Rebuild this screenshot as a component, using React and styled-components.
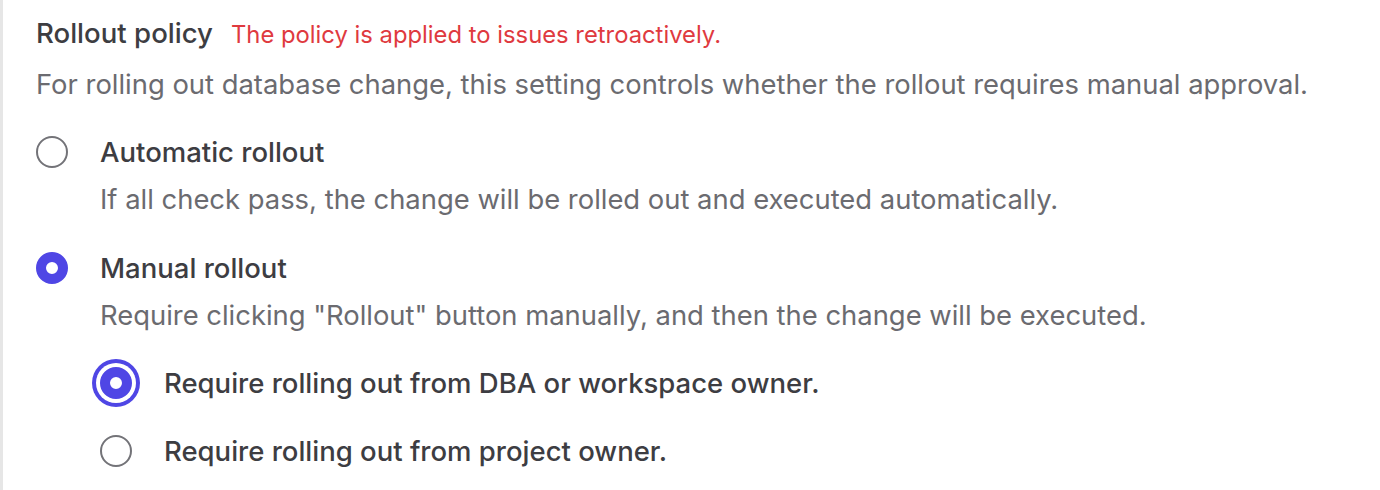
import React, { useState } from 'react';
import styled, { createGlobalStyle } from 'styled-components';

const GlobalStyle = createGlobalStyle`
  body {
    margin: 0;
    background: #ffffff;
    font-family: Inter, "Noto Sans", sans-serif;
  }
`;

const Panel = styled.section`
  border-left: 3px solid #e6e6e6;
  min-height: 490px;
  box-sizing: border-box;
  padding: 13px 0 0 33px;
`;

const TitleRow = styled.div`
  display: flex;
  align-items: baseline;
  gap: 18px;
  line-height: 40px;
`;

const Title = styled.h2`
  margin: 0;
  font-size: 27.6px;
  font-weight: 500;
  color: #3d3d42;
`;

const Warning = styled.span`
  font-size: 23.8px;
  color: #df3a3f;
`;

const Description = styled.p`
  margin: ${({ $top }) => $top || '9px'} 0 0;
  font-size: 27.4px;
  line-height: 40px;
  color: #6b6b70;
`;

const Options = styled.div`
  display: flex;
  flex-direction: column;
  gap: ${({ $gap }) => $gap || '29px'};
  margin-top: ${({ $top }) => $top || '28px'};
`;

const Option = styled.label`
  display: flex;
  align-items: center;
  gap: 32px;
  cursor: pointer;
  line-height: 40px;
`;

const Radio = styled.span`
  flex: none;
  width: 32px;
  height: 32px;
  box-sizing: border-box;
  border-radius: 50%;
  border: ${({ $checked }) => ($checked ? '10px solid #4f46e5' : '2px solid #737378')};
  background: #ffffff;
  box-shadow: ${({ $focus }) => ($focus ? '0 0 0 4px #ffffff, 0 0 0 8px #4f46e5' : 'none')};
`;

const Label = styled.span`
  font-size: 27.5px;
  font-weight: 500;
  color: #3d3d42;
`;

const Block = styled.div`
  padding-left: 64px;
  margin-top: 7px;
`;

export default function App() {
  const [mode, setMode] = useState('manual');
  const [approver, setApprover] = useState('dba');

  return (
    <>
      <GlobalStyle />
      <Panel>
        <TitleRow>
          <Title>Rollout policy</Title>
          <Warning>The policy is applied to issues retroactively.</Warning>
        </TitleRow>
        <Description>
          For rolling out database change, this setting controls whether the rollout requires manual approval.
        </Description>

        <Options>
          <div>
            <Option onClick={() => setMode('auto')}>
              <Radio $checked={mode === 'auto'} />
              <Label>Automatic rollout</Label>
            </Option>
            <Block>
              <Description $top="0">
                If all check pass, the change will be rolled out and executed automatically.
              </Description>
            </Block>
          </div>
          <div>
            <Option onClick={() => setMode('manual')}>
              <Radio $checked={mode === 'manual'} />
              <Label>Manual rollout</Label>
            </Option>
            <Block>
              <Description $top="0">
                Require clicking "Rollout" button manually, and then the change will be executed.
              </Description>
              <Options $top="28px" $gap="28px">
                <Option onClick={() => setApprover('dba')}>
                  <Radio $checked={approver === 'dba'} $focus={approver === 'dba'} />
                  <Label>Require rolling out from DBA or workspace owner.</Label>
                </Option>
                <Option onClick={() => setApprover('project')}>
                  <Radio $checked={approver === 'project'} />
                  <Label>Require rolling out from project owner.</Label>
                </Option>
              </Options>
            </Block>
          </div>
        </Options>
      </Panel>
    </>
  );
}
